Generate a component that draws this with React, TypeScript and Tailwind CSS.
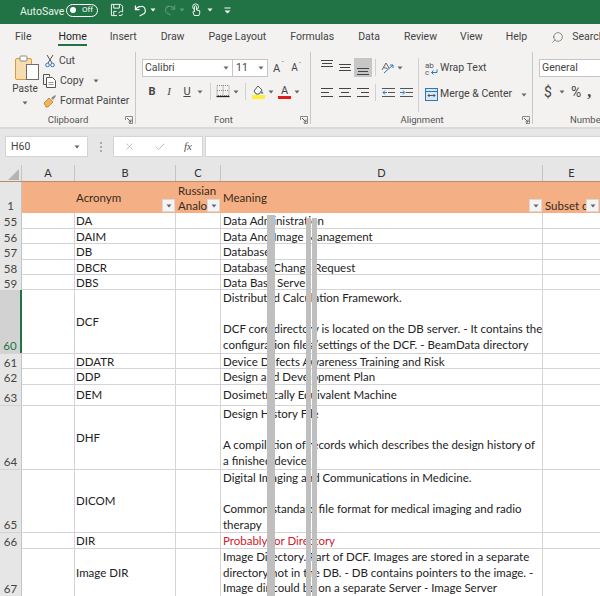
import React from 'react'
import { Search, X, Check } from 'lucide-react'

const Caret = ({ className = '' }: { className?: string }) => (
  <svg width="6" height="4" viewBox="0 0 6 4" className={`shrink-0 ${className}`}>
    <path d="M0.5 0.5h5L3 3.5z" fill="#666" />
  </svg>
)

const Launcher = () => (
  <svg width="8" height="8" viewBox="0 0 8 8" className="shrink-0">
    <path d="M0.5 4V0.5H7.5V7.5H4" fill="none" stroke="#888" />
    <path d="M2 2l4 4M6 3.5V6H3.5" fill="none" stroke="#666" />
  </svg>
)

const Lines = ({ widths, y = [0, 4, 8] }: { widths: [number, number][]; y?: number[] }) => (
  <svg width="12" height="10" viewBox="0 0 12 10" className="shrink-0">
    {widths.map(([x, w], i) => (
      <rect key={i} x={x} y={y[i]} width={w} height="1" fill="#444" />
    ))}
  </svg>
)

const TitleBar = () => (
  <div className="h-[24px] bg-[#217346] flex items-center text-white shrink-0">
    <span className="ml-[20px] w-[42px] text-[10.5px] leading-none text-[#e8f2ec] whitespace-nowrap">AutoSave</span>
    <div className="ml-[4px] w-[32px] h-[13px] -mt-[4px] rounded-full border border-white flex items-center">
      <span className="ml-[3px] w-[6px] h-[6px] rounded-full bg-white" />
      <span className="ml-[6px] text-[8px] leading-none">Off</span>
    </div>
    <svg width="14" height="14" viewBox="0 0 15 15" className="ml-[12px] -mt-[4px]" fill="none" stroke="#fff" strokeWidth="1">
      <path d="M1.5 1.5h10l2 2v6M1.5 1.5v12h6" />
      <path d="M4 1.5v4h6v-4M4 13V9h3" />
      <path d="M9.5 11a2.5 2.5 0 0 1 4-1.5M13.5 11.5a2.5 2.5 0 0 1-4 1.5" />
    </svg>
    <svg width="13" height="13" viewBox="0 0 14 14" className="ml-[10px] -mt-[4px]" fill="none" stroke="#fff" strokeWidth="1.2">
      <path d="M1.5 1.5v4.5h4.5" />
      <path d="M1.5 6C3 3.5 5 2.5 7.5 2.5a4.5 4.5 0 0 1 2 8.6L6 13" />
    </svg>
    <svg width="6" height="4" viewBox="0 0 6 4" className="ml-[3px] -mt-[4px]"><path d="M0.5 0.5h5L3 3.500z" fill="#fff" /></svg>
    <svg width="12" height="12" viewBox="0 0 14 14" className="ml-[8px] -mt-[4px]" fill="none" stroke="#5f9b7c" strokeWidth="1.2">
      <path d="M12.5 1.5v4.5H8" />
      <path d="M12.5 6C11 3.5 9 2.5 6.5 2.5a4.5 4.5 0 0 0-2 8.6L8 13" />
    </svg>
    <svg width="6" height="4" viewBox="0 0 6 4" className="ml-[3px] -mt-[4px]"><path d="M0.5 0.5h5L3 3.500z" fill="#5f9b7c" /></svg>
    <svg width="11" height="14" viewBox="0 0 12 15" className="ml-[6px] -mt-[4px]" fill="none" stroke="#fff" strokeWidth="1">
      <circle cx="5" cy="4" r="3.2" />
      <path d="M3.5 13.5L2 9.5c.5-.7 1.2-.5 1.700.2V4a1.100 1.100 0 0 1 2.300 0v3.500l3.500.8v2.700l-.8 2.500z" fill="#217346" />
    </svg>
    <svg width="6" height="4" viewBox="0 0 6 4" className="ml-[5px] -mt-[4px]"><path d="M0.5 0.5h5L3 3.500z" fill="#fff" /></svg>
    <svg width="7" height="7" viewBox="0 0 7 7" className="ml-[11px] -mt-[4px]">
      <rect x="0.500" y="0.500" width="6" height="1" fill="#fff" />
      <path d="M0.500 3.500h6L3.500 6.500z" fill="#fff" />
    </svg>
  </div>
)

const tabs = [
  { label: 'File', cls: 'ml-[15px]' },
  { label: 'Home', cls: 'ml-[27px] text-[#222] border-b-2 border-[#217346]' },
  { label: 'Insert', cls: 'ml-[23px]' },
  { label: 'Draw', cls: 'ml-[24px]' },
  { label: 'Page Layout', cls: 'ml-[24px]' },
  { label: 'Formulas', cls: 'ml-[24px]' },
  { label: 'Data', cls: 'ml-[24px]' },
  { label: 'Review', cls: 'ml-[24px]' },
  { label: 'View', cls: 'ml-[23px]' },
  { label: 'Help', cls: 'ml-[23px]' },
]

const TabRow = () => (
  <div className="h-[24px] bg-[#f3f2f1] flex items-start pt-[6px] text-[10.5px] leading-[14px] text-[#444] shrink-0 whitespace-nowrap">
    {tabs.map(t => (
      <span key={t.label} className={`h-[16px] ${t.cls}`}>{t.label}</span>
    ))}
    <Search size={13} strokeWidth={1.2} className="ml-[24px] mt-[1px] shrink-0 -scale-x-100 text-[#555]" />
    <span className="ml-[8px]">Search</span>
  </div>
)

const GroupLabel = ({ label, launcher }: { label: string; launcher?: boolean }) => (
  <div className="absolute bottom-0 left-0 right-0 h-[13px] flex items-center justify-center text-[9.5px] text-[#555]">
    {label}
    {launcher && <span className="absolute right-[3px] top-[2px]"><Launcher /></span>}
  </div>
)

const GroupDivider = () => <span className="absolute right-0 top-[4px] bottom-[3px] w-px bg-[#c8c8c8]" />

const Clipboard = () => (
  <div className="relative w-[136px] h-[79px] shrink-0">
    <GroupDivider />
    <div className="flex">
      <div className="w-[40px] ml-[5px] pt-[7px] flex flex-col items-center">
        <svg width="24" height="26" viewBox="0 0 24 26" className="ml-[3px]">
          <rect x="0.500" y="3.500" width="16" height="21" rx="1.500" fill="#f6dcae" stroke="#d69a3c" />
          <rect x="5" y="1" width="7" height="5" rx="1" fill="#fff" stroke="#8a8a8a" />
          <rect x="11.500" y="9.500" width="12" height="15" fill="#fff" stroke="#6d6d6d" />
        </svg>
        <span className="text-[10px] leading-[12px] mt-[2px] text-[#444]">Paste</span>
        <Caret className="mt-[6px]" />
      </div>
      <div className="flex flex-col pt-[3px] ml-[-1px] text-[10.5px] leading-[20px] text-[#444] whitespace-nowrap">
        <div className="flex items-center h-[20px]">
          <svg width="10" height="14" viewBox="0 0 10 14" fill="none" stroke="#555" className="ml-[1px]">
            <path d="M2 1l5 8M8 1L3 9" />
            <circle cx="2.500" cy="11" r="1.800" stroke="#2b78c2" />
            <circle cx="7.500" cy="11" r="1.800" stroke="#2b78c2" />
          </svg>
          <span className="ml-[4px]">Cut</span>
        </div>
        <div className="flex items-center h-[20px]">
          <svg width="14" height="14" viewBox="0 0 14 14" fill="none" stroke="#555" className="ml-[-1px]">
            <path d="M3.500 10.500h-3v-10h6v2" />
            <path d="M3.500 3.500h6l3 3v7h-9z" fill="#fff" />
            <path d="M5.500 8.500h5M5.500 10.500h5" stroke="#999" />
          </svg>
          <span className="ml-[3px]">Copy</span>
          <Caret className="ml-[9px]" />
        </div>
        <div className="flex items-center h-[19px]">
          <svg width="14" height="14" viewBox="0 0 14 14" className="ml-[-1px]">
            <path d="M1 9l5-5 4 4-5 5H3z" fill="#f0b45a" stroke="#b87a2a" strokeWidth="0.800" />
            <path d="M8 4l4-3 1 1-3 4z" fill="#888" />
          </svg>
          <span className="ml-[3px]">Format Painter</span>
        </div>
      </div>
    </div>
    <GroupLabel label="Clipboard" launcher />
  </div>
)

const Sep = ({ cls }: { cls: string }) => <span className={`w-px h-[17px] bg-[#d0d0d0] shrink-0 ${cls}`} />

const Font = () => (
  <div className="relative w-[175px] h-[79px] shrink-0">
    <GroupDivider />
    <div className="flex items-center pl-[6px] pt-[11px]">
      <div className="w-[91px] h-[18px] bg-white border border-[#c6c6c6] flex items-center pl-[2px] text-[10.5px] text-[#444]">
        Calibri
        <Caret className="ml-auto mr-[3px]" />
      </div>
      <div className="w-[35px] h-[18px] bg-white border border-l-0 border-[#c6c6c6] flex items-center pl-[3px] text-[10.5px] text-[#444]">
        11
        <Caret className="ml-auto mr-[3px]" />
      </div>
      <span className="ml-[5px] text-[11px] leading-none text-[#444] relative">A<span className="absolute -top-[1px] left-[8px] text-[7px] text-[#2b78c2]">ˆ</span></span>
      <span className="ml-[11px] text-[10px] leading-none text-[#444] relative">A<span className="absolute top-0 left-[7px] text-[7px] text-[#2b78c2]">ˇ</span></span>
    </div>
    <div className="flex items-center pl-[12px] mt-[6px] h-[17px] text-[#444]">
      <span className="w-[8px] text-[11px] font-bold leading-none text-center">B</span>
      <span className="ml-[10px] w-[6px] text-[11px] italic leading-none font-['Liberation_Serif',serif] text-center">I</span>
      <span className="ml-[11px] w-[8px] text-[11px] underline leading-none text-center">U</span>
      <Caret className="ml-[6px]" />
      <Sep cls="ml-[7px]" />
      <svg width="14" height="13" viewBox="0 0 14 13" className="ml-[5px]" fill="none">
        <path d="M1 .5h12v10H1z" stroke="#888" strokeDasharray="1 1" />
        <path d="M7 .5v10M1 5.500h12" stroke="#888" strokeDasharray="1 1" />
        <path d="M.500 11.500h13" stroke="#222" strokeWidth="1.300" />
      </svg>
      <Caret className="ml-[3px]" />
      <Sep cls="ml-[6px]" />
      <svg width="13" height="15" viewBox="0 0 13 15" className="ml-[6px]">
        <path d="M2 7l4-5 4 4-3 4H4z" fill="#fff" stroke="#555" />
        <path d="M10 7l1.500 2.500h-3z" fill="#2b78c2" />
        <rect x="0" y="11" width="13" height="4" fill="#ffef3a" />
      </svg>
      <Caret className="ml-[3px]" />
      <span className="ml-[4px] w-[13px] flex flex-col items-center">
        <span className="text-[11px] leading-[11px]">A</span>
        <span className="w-[13px] h-[3px] bg-[#e21a1a]" />
      </span>
      <Caret className="ml-[3px]" />
    </div>
    <GroupLabel label="Font" launcher />
  </div>
)

const Alignment = () => (
  <div className="relative w-[222px] h-[79px] shrink-0">
    <GroupDivider />
    <div className="flex">
      <div className="w-[107px] shrink-0 pl-[7px]">
        <div className="flex items-center h-[19px] mt-[10px]">
          <span className="w-[18px] h-[19px] flex items-start justify-center pt-[2px]">
            <Lines widths={[[0, 12], [1, 10], [0, 12]]} y={[0, 3, 6]} />
          </span>
          <span className="w-[18px] h-[19px] flex items-center justify-center">
            <Lines widths={[[0, 12], [1, 10], [0, 12]]} y={[1, 4, 7]} />
          </span>
          <span className="w-[18px] h-[19px] bg-[#c6c6c6] flex items-end justify-center pb-[2px]">
            <Lines widths={[[0, 12], [1, 10], [0, 12]]} y={[3, 6, 9]} />
          </span>
          <Sep cls="ml-[3px]" />
          <svg width="13" height="12" viewBox="0 0 13 12" className="ml-[5px]" fill="none">
            <path d="M1 8l4-7 3 5M2.500 5.500l4 1" stroke="#666" />
            <path d="M3 11L12 3M12 3H9M12 3v3" stroke="#2b78c2" />
          </svg>
          <Caret className="ml-[3px]" />
        </div>
        <div className="flex items-center h-[19px] mt-[6px]">
          <span className="w-[18px] flex justify-center"><Lines widths={[[0, 12], [0, 8], [0, 12]]} /></span>
          <span className="w-[18px] flex justify-center"><Lines widths={[[0, 12], [2, 8], [0, 12]]} /></span>
          <span className="w-[18px] flex justify-center"><Lines widths={[[0, 12], [4, 8], [0, 12]]} /></span>
          <Sep cls="ml-[3px]" />
          <svg width="13" height="10" viewBox="0 0 13 10" className="ml-[6px]">
            <path d="M0 .5h13M6 4.500h7M0 8.500h13" stroke="#555" />
            <path d="M5 4.500H1M3 2.500l-2 2 2 2" stroke="#2b78c2" fill="none" />
          </svg>
          <svg width="13" height="10" viewBox="0 0 13 10" className="ml-[5px]">
            <path d="M0 .5h13M6 4.500h7M0 8.500h13" stroke="#555" />
            <path d="M0 4.500h4M3 2.500l2 2-2 2" stroke="#2b78c2" fill="none" />
          </svg>
        </div>
      </div>
      <Sep cls="mt-[10px] !h-[54px] bg-[#c8c8c8]" />
      <div className="flex flex-col pl-[6px] text-[10.5px] text-[#444] leading-none whitespace-nowrap">
        <div className="flex items-center h-[19px] mt-[11px]">
          <span className="relative w-[13px] h-[14px] shrink-0 text-[8px] leading-[7px] text-[#555]">
            ab<br />c
            <svg width="8" height="7" viewBox="0 0 8 7" className="absolute left-[5px] top-[7px]" fill="none" stroke="#2b78c2">
              <path d="M7 .5V3.500H1.500M3.500 1.500l-2 2 2 2" />
            </svg>
          </span>
          <span className="ml-[2px]">Wrap Text</span>
        </div>
        <div className="flex items-center h-[19px] mt-[7px]">
          <svg width="13" height="13" viewBox="0 0 13 13" className="mr-[2px]" fill="none">
            <rect x="0.500" y="0.500" width="12" height="12" fill="#d8e8f5" stroke="#2b78c2" />
            <path d="M0 3.500h13" stroke="#2b78c2" />
            <path d="M3 7.500h7M3 7.500l1.500-1.500M3 7.500L4.500 9M10 7.500L8.500 6M10 7.500L8.500 9" stroke="#555" />
          </svg>
          <span>Merge &amp; Center</span>
          <Caret className="ml-[9px]" />
        </div>
      </div>
    </div>
    <GroupLabel label="Alignment" launcher />
  </div>
)

const NumberGroup = () => (
  <div className="relative flex-1 h-[79px] overflow-hidden">
    <div className="pl-[6px] pt-[11px]">
      <div className="w-[80px] h-[18px] bg-white border border-[#c6c6c6] flex items-center pl-[2px] text-[10.5px] text-[#444]">General</div>
    </div>
    <div className="flex items-center pl-[11px] mt-[5px] h-[20px] text-[#444] whitespace-nowrap">
      <span className="text-[14px] leading-none">$</span>
      <Caret className="ml-[7px]" />
      <span className="ml-[6px] text-[14px] leading-none">%</span>
      <span className="ml-[6px] text-[16px] leading-none font-bold font-['Liberation_Serif',serif]">,</span>
    </div>
    <div className="absolute bottom-0 left-[37px] h-[13px] flex items-center text-[9.5px] text-[#555] whitespace-nowrap">Number</div>
  </div>
)

const Ribbon = () => (
  <div className="h-[79px] bg-[#f3f2f1] flex shrink-0">
    <Clipboard />
    <Font />
    <Alignment />
    <NumberGroup />
  </div>
)

const FormulaBar = () => (
  <div className="h-[38px] bg-[#e6e6e6] flex items-start pt-[7px] border-t-2 border-[#dadada] shrink-0">
    <div className="ml-[5px] w-[83px] h-[21px] bg-white border border-[#d4d4d4] flex items-center pl-[5px] text-[10.5px] text-[#444]">
      H60
      <Caret className="ml-auto mr-[7px]" />
    </div>
    <div className="w-[25px] h-[21px] flex items-center justify-center">
      <span className="flex flex-col gap-[2px]">
        <span className="w-[2px] h-[2px] bg-[#aaa]" />
        <span className="w-[2px] h-[2px] bg-[#aaa]" />
        <span className="w-[2px] h-[2px] bg-[#aaa]" />
      </span>
    </div>
    <div className="w-[90px] h-[21px] bg-white border border-[#d4d4d4] flex items-center text-[#aaa]">
      <X size={11} strokeWidth={1.5} className="ml-[10px]" />
      <Check size={12} strokeWidth={1.5} className="ml-[19px]" />
      <span className="ml-[18px] text-[11px] italic font-['Liberation_Serif',serif] text-[#555] leading-none">fx</span>
    </div>
    <div className="ml-[2px] flex-1 h-[21px] bg-white border border-r-0 border-[#d4d4d4]" />
  </div>
)

const FilterBtn = () => (
  <span className="absolute right-[1px] bottom-[1px] w-[13px] h-[13px] bg-[#f4f4f4] border border-[#d9d9d9] flex items-center justify-center">
    <Caret />
  </span>
)

const ColHeaders = () => (
  <div className="grid grid-cols-[22px_53px_101px_45px_322px_57px] h-[16px] bg-[#e6e6e6] text-[11px] leading-[16px] text-[#333] text-center shrink-0 font-['Lato',sans-serif]">
    <div className="relative border-r border-[#c4c4c4]">
      <svg width="11" height="11" viewBox="0 0 11 11" className="absolute right-[2px] bottom-[1px]"><path d="M11 0v11H0z" fill="#b4b4b4" /></svg>
    </div>
    {['A', 'B', 'C', 'D', 'E'].map(c => (
      <div key={c} className="border-r border-[#c4c4c4] last:border-r-0">{c}</div>
    ))}
  </div>
)

const HeaderRow = () => (
  <div className="grid grid-cols-[22px_53px_101px_45px_322px_57px] h-[32px] bg-[#f4b084] border-t border-[#c08a68] text-[11.5px] text-[#3a2a20] shrink-0 font-['Lato',sans-serif]">
    <div className="bg-[#e6e6e6] border-r border-[#c4c4c4] flex items-end justify-center text-[#444] leading-[15px]">1</div>
    <div />
    <div className="relative flex items-center pl-[1px]">Acronym<FilterBtn /></div>
    <div className="relative pl-[2px] leading-[15px] pt-[1px] overflow-hidden whitespace-nowrap">Russian<br />Analo<FilterBtn /></div>
    <div className="relative flex items-center pl-[2px]">Meaning<FilterBtn /></div>
    <div className="relative flex items-end pl-[2px] leading-[15px] overflow-hidden whitespace-nowrap">Subset c<FilterBtn /></div>
  </div>
)

interface Row {
  num: number
  acr: string
  h: string
  lines: string[]
  red?: boolean
  active?: boolean
  center?: boolean
}

const rows: Row[] = [
  { num: 55, acr: 'DA', h: 'h-[16px]', lines: ['Data Administration'] },
  { num: 56, acr: 'DAIM', h: 'h-[15px]', lines: ['Data And Image Management'] },
  { num: 57, acr: 'DB', h: 'h-[16px]', lines: ['Database'] },
  { num: 58, acr: 'DBCR', h: 'h-[15px]', lines: ['Database Change Request'] },
  { num: 59, acr: 'DBS', h: 'h-[15px]', lines: ['Data Base Server'] },
  {
    num: 60,
    acr: 'DCF',
    h: 'h-[64px]',
    active: true,
    lines: [
      'Distributed Calculation Framework.',
      '',
      'DCF core directory is located on the DB server. - It contains the',
      'configuration files/settings of the DCF. - BeamData directory',
    ],
  },
  { num: 61, acr: 'DDATR', h: 'h-[15px]', lines: ['Device Defects Awareness Training and Risk'] },
  { num: 62, acr: 'DDP', h: 'h-[16px]', lines: ['Design and Development Plan'] },
  { num: 63, acr: 'DEM', h: 'h-[21px]', center: true, lines: ['Dosimetrically Equivalent Machine'] },
  {
    num: 64,
    acr: 'DHF',
    h: 'h-[64px]',
    lines: [
      'Design History File',
      '',
      'A compilation of records which describes the design history of',
      'a finished device',
    ],
  },
  {
    num: 65,
    acr: 'DICOM',
    h: 'h-[63px]',
    lines: [
      'Digital Imaging and Communications in Medicine.',
      '',
      'Common standard file format for medical imaging and radio',
      'therapy',
    ],
  },
  { num: 66, acr: 'DIR', h: 'h-[16px]', red: true, lines: ['Probably for Directory'] },
  {
    num: 67,
    acr: 'Image DIR',
    h: 'h-[48px]',
    lines: [
      'Image Directory. Part of DCF. Images are stored in a separate',
      'directory not in the DB. - DB contains pointers to the image. -',
      'Image dir could be on a separate Server - Image Server',
    ],
  },
]

const SheetRow = ({ row }: { row: Row }) => (
  <div className={`grid grid-cols-[22px_53px_101px_45px_322px_57px] ${row.h} text-[11.5px] leading-[15.6px] text-[#222] border-b border-[#d4d4d4] box-border shrink-0 font-['Lato',sans-serif]`}>
    <div className={`flex items-end justify-center leading-[14px] ${row.active ? 'bg-[#d2d2d2] border-r-2 border-[#217346] text-[#217346]' : 'bg-[#e6e6e6] border-r border-[#c4c4c4] text-[#444]'}`}>
      {row.num}
    </div>
    <div className="border-r border-[#d4d4d4]" />
    <div className="border-r border-[#d4d4d4] pl-[1px] flex items-center">{row.acr}</div>
    <div className="border-r border-[#d4d4d4]" />
    <div className={`border-r border-[#d4d4d4] pl-[2px] whitespace-nowrap overflow-hidden ${row.red ? 'text-[#d0202a]' : ''} ${row.center ? 'flex items-center' : ''}`}>
      {row.lines.map((l, i) => (
        <div key={i} className="h-[15.6px]">{l}</div>
      ))}
    </div>
    <div />
  </div>
)

export default function App() {
  return (
    <div className="relative w-[600px] h-[596px] overflow-hidden bg-white flex flex-col font-['Roboto',sans-serif]">
      <TitleBar />
      <TabRow />
      <Ribbon />
      <FormulaBar />
      <ColHeaders />
      <HeaderRow />
      {rows.map(r => (
        <SheetRow key={r.num} row={r} />
      ))}
      {/* grey redaction strips over the Meaning column */}
      <div className="absolute left-[267px] top-[215px] bottom-0 w-[8px] bg-[#bfbfbf]" />
      <div className="absolute left-[306px] top-[218px] bottom-0 w-[5px] bg-[#bfbfbf]" />
      <div className="absolute left-[312px] top-[218px] bottom-0 w-[5px] bg-[#bfbfbf]" />
    </div>
  )
}
